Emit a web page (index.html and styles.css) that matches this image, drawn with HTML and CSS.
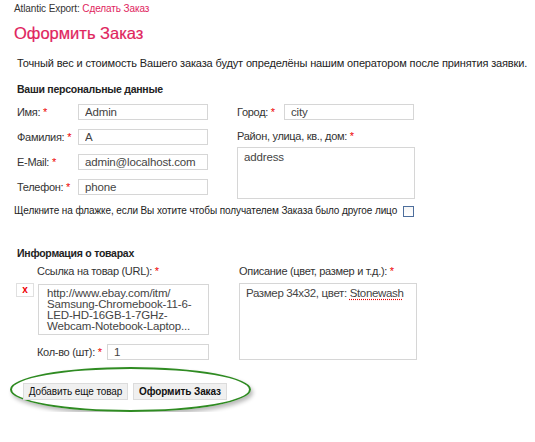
FILE: index.html
```html
<!DOCTYPE html>
<html lang="ru">
<head>
<meta charset="utf-8">
<link rel="stylesheet" href="styles.css">
</head>
<body>
<div class="crumb">Atlantic Export: <a class="crumb-link">Сделать Заказ</a></div>
<h1 class="title">Оформить Заказ</h1>
<p class="intro">Точный вес и стоимость Вашего заказа будут определёны нашим оператором после принятия заявки.</p>

<h2 class="section">Ваши персональные данные</h2>
<div class="personal">
  <div class="col-left">
    <div class="row"><label class="lbl">Имя: <span class="req">*</span></label><input class="field" value="Admin"></div>
    <div class="row"><label class="lbl">Фамилия: <span class="req">*</span></label><input class="field" value="A"></div>
    <div class="row"><label class="lbl">E-Mail: <span class="req">*</span></label><input class="field" value="admin@localhost.com"></div>
    <div class="row"><label class="lbl">Телефон: <span class="req">*</span></label><input class="field" value="phone"></div>
  </div>
  <div class="col-right">
    <div class="row"><label class="lbl lbl-city">Город: <span class="req">*</span></label><input class="field" value="city"></div>
    <label class="lbl lbl-block">Район, улица, кв., дом: <span class="req">*</span></label>
    <textarea class="area area-addr">address</textarea>
  </div>
</div>
<div class="other">Щелкните на флажке, если Вы хотите чтобы получателем Заказа было другое лицо <span class="check"></span></div>

<h2 class="section section-goods">Информация о товарах</h2>
<div class="goods">
  <div class="goods-left">
    <label class="lbl lbl-url">Ссылка на товар (URL): <span class="req">*</span></label>
    <div class="url-row">
      <span class="remove">x</span>
      <div class="area area-url">http://www.ebay.com/itm/<br>Samsung-Chromebook-11-6-<br>LED-HD-16GB-1-7GHz-<br>Webcam-Notebook-Laptop...</div>
    </div>
    <div class="qty-row"><label class="lbl lbl-qty">Кол-во (шт): <span class="req">*</span></label><input class="field field-qty" value="1"></div>
  </div>
  <div class="goods-right">
    <label class="lbl lbl-block">Описание (цвет, размер и т.д.): <span class="req">*</span></label>
    <div class="area area-desc">Размер 34x32, цвет: <span class="spell">Stonewash</span></div>
  </div>
</div>

<div class="actions">
  <button class="btn btn-add">Добавить еще товар</button>
  <button class="btn btn-bold">Оформить Заказ</button>
</div>
</body>
</html>
```
FILE: styles.css
```css
body {
  margin: 0;
  font-family: "Liberation Sans", Arial, sans-serif;
  color: #333;
  background: #fff;
}
.crumb {
  font-size: 10px;
  line-height: 12px;
  letter-spacing: -0.1px;
  padding: 3px 0 0 14px;
  color: #333;
}
.crumb-link { color: #e0245e; }
.title {
  margin: 8px 0 0 14px;
  font-size: 16.5px;
  line-height: 20px;
  font-weight: normal;
  color: #e0245e;
  -webkit-text-stroke: 0.2px #e0245e;
}
.intro {
  margin: 13px 0 0 17px;
  font-size: 11px;
  line-height: 14px;
  letter-spacing: -0.14px;
  color: #222;
  white-space: nowrap;
}
.section {
  margin: 12px 0 0 17px;
  font-size: 10.5px;
  line-height: 14px;
  letter-spacing: -0.25px;
  font-weight: bold;
  color: #222;
}
.personal {
  display: flex;
  gap: 29px;
  margin: 8px 0 0 17px;
}
.col-left {
  display: flex;
  flex-direction: column;
  gap: 9px;
  width: 191px;
}
.row {
  display: flex;
  align-items: center;
  height: 16px;
}
.lbl {
  font-size: 11px;
  line-height: 13px;
  letter-spacing: -0.3px;
  color: #333;
  white-space: nowrap;
}
.col-left .lbl { width: 61px; flex: none; }
.req { color: #e00; }
.field {
  box-sizing: border-box;
  width: 130px;
  height: 16px;
  border: 1px solid #d6d6d6;
  padding: 0 0 0 6px;
  font: 11.5px "Liberation Sans", Arial, sans-serif;
  letter-spacing: -0.15px;
  color: #444;
  background: #fff;
  outline: none;
}
.col-right { width: 180px; }
.lbl-city { width: 47px; flex: none; }
.lbl-block { display: block; margin-top: 10px; }
.area {
  display: block;
  box-sizing: border-box;
  border: 1px solid #d6d6d6;
  font: 11.5px/13px "Liberation Sans", Arial, sans-serif;
  letter-spacing: -0.15px;
  color: #444;
  background: #fff;
  resize: none;
  outline: none;
  overflow: hidden;
  white-space: nowrap;
}
.area-addr {
  width: 178px;
  height: 52px;
  margin-top: 4px;
  padding: 3px 6px;
}
.other {
  margin: 6px 0 0 14px;
  font-size: 10px;
  line-height: 12px;
  letter-spacing: -0.1px;
  color: #222;
  display: flex;
  align-items: center;
  gap: 6px;
  white-space: nowrap;
}
.check {
  display: inline-block;
  width: 11px;
  height: 11px;
  box-sizing: border-box;
  border: 1px solid #4d6e9c;
  background: linear-gradient(#f6f6f6, #fff);
}
.section-goods { margin-top: 29px; }
.goods {
  display: flex;
  gap: 30px;
  margin: 5px 0 0 16px;
}
.goods-left { width: 193px; }
.lbl-url { display: block; padding-left: 21px; }
.url-row {
  display: flex;
  align-items: flex-start;
  gap: 4px;
  margin-top: 5px;
}
.remove {
  box-sizing: border-box;
  width: 18px;
  height: 14px;
  border: 1px solid #e0e0e0;
  color: #e00;
  font-size: 10px;
  font-weight: bold;
  line-height: 11px;
  text-align: center;
}
.area-url {
  width: 171px;
  height: 51px;
  margin-top: 1px;
  padding: 3px 8px;
  font-size: 11.5px;
  line-height: 11px;
}
.qty-row {
  display: flex;
  align-items: center;
  margin-top: 9px;
  padding-left: 21px;
  height: 16px;
}
.lbl-qty { width: 70px; flex: none; }
.field-qty { width: 102px; }
.goods-right { width: 180px; }
.goods-right .lbl-block { margin-top: 0; }
.area-desc {
  width: 178px;
  height: 77px;
  margin-top: 5px;
  padding: 3px 6px;
  letter-spacing: -0.35px;
}
.spell {
  text-decoration: underline dotted #e00;
  text-underline-offset: 2px;
}
.actions {
  display: inline-flex;
  align-items: flex-start;
  gap: 5px;
  box-sizing: border-box;
  width: 241px;
  height: 45px;
  margin: 7px 0 0 10px;
  padding: 14px 0 0 11px;
  border: 2px solid #2f8b22;
  border-radius: 50%;
  box-shadow: 2px 3px 4px rgba(0, 0, 0, 0.28);
}
.btn {
  box-sizing: border-box;
  height: 17px;
  padding: 0;
  border: 1px solid #dcdcdc;
  background: #f0f0f0;
  font: 10px "Liberation Sans", Arial, sans-serif;
  letter-spacing: -0.1px;
  color: #111;
  white-space: nowrap;
  text-align: center;
}
.btn-add { width: 105px; }
.btn-bold { width: 94px; font-weight: bold; }
```
